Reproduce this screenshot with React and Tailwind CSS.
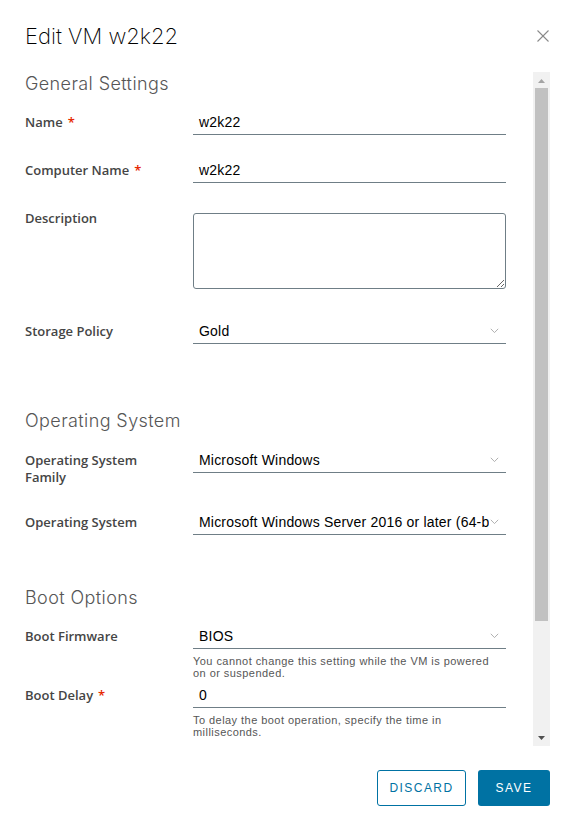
import React from "react";

const labelCls =
  "w-[169px] shrink-0 pt-[3px] pl-px text-[13px] leading-[17px] font-semibold text-[#454545] font-['Open_Sans',sans-serif]";
const headingCls =
  "text-[18px] leading-[24px] font-light text-[#565656] font-['Inter',sans-serif] tracking-[0.4px] pl-px";
const valueCls =
  "text-[14px] leading-[23px] tracking-[0.2px] text-black font-['Liberation_Sans',Arial,sans-serif]";
const helperCls =
  "mt-[6px] text-[11px] leading-[12px] tracking-[0.45px] text-[#565656] font-['Liberation_Sans',Arial,sans-serif] pr-[14px]";

function Req() {
  return <span className="ml-[5px] text-[#e62700]">*</span>;
}

function Label({ children, req }) {
  return (
    <div className={labelCls}>
      {children}
      {req && <Req />}
    </div>
  );
}

function TextInput({ value }) {
  return (
    <div className={`h-[24px] border-b border-[#6f7e86] pl-[6px] ${valueCls}`}>{value}</div>
  );
}

function Chevron() {
  return (
    <svg width="9" height="6" viewBox="0 0 9 6" className="block">
      <polyline points="0.8,0.8 4.5,4.6 8.2,0.8" fill="none" stroke="#b0b0b0" strokeWidth="1" />
    </svg>
  );
}

function Select({ value }) {
  return (
    <div className={`h-[24px] border-b border-[#6f7e86] pl-[6px] flex items-start ${valueCls}`}>
      <div className="flex-1 min-w-0 overflow-hidden whitespace-nowrap">{value}</div>
      <div className="w-[17px] shrink-0 pt-[8px] pl-[1px]">
        <Chevron />
      </div>
    </div>
  );
}

function Row({ className = "", label, req, children }) {
  return (
    <div className={`flex items-start ${className}`}>
      <Label req={req}>{label}</Label>
      <div className="flex-1 min-w-0">{children}</div>
    </div>
  );
}

function Scrollbar() {
  return (
    <div className="w-[17px] shrink-0 bg-[#f1f1f1] flex flex-col">
      <div className="h-[17px] flex items-center justify-center">
        <svg width="7" height="4" viewBox="0 0 7 4">
          <polygon points="0,4 3.5,0 7,4" fill="#a3a3a3" />
        </svg>
      </div>
      <div className="flex-1">
        <div className="mx-[2px] h-[533px] bg-[#c1c1c1] -mt-px" />
      </div>
      <div className="h-[17px] flex items-center justify-center">
        <svg width="7" height="4" viewBox="0 0 7 4">
          <polygon points="0,0 3.5,4 7,0" fill="#505050" />
        </svg>
      </div>
    </div>
  );
}

export default function App() {
  return (
    <div className="w-[574px] h-[829px] bg-white overflow-hidden flex flex-col">
      {/* Header */}
      <div className="h-[72px] shrink-0 flex items-start justify-between pl-6 pr-[25px] pt-[18px]">
        <h1 className="text-[22px] leading-[36px] font-extralight text-black font-['Inter',sans-serif] pl-px">
          Edit VM w2k22
        </h1>
        <svg width="12" height="12" viewBox="0 0 12 12" className="mt-[12px]">
          <line x1="0.5" y1="0.5" x2="11.5" y2="11.5" stroke="#8a8a8a" strokeWidth="1.1" />
          <line x1="11.5" y1="0.5" x2="0.5" y2="11.5" stroke="#8a8a8a" strokeWidth="1.1" />
        </svg>
      </div>

      {/* Body */}
      <div className="h-[674px] shrink-0 flex pl-6 pr-6">
        <div className="flex-1 min-w-0 overflow-hidden pr-[27px]">
          <div className={headingCls}>General Settings</div>

          <Row className="mt-[15px]" label="Name" req>
            <TextInput value="w2k22" />
          </Row>
          <Row className="mt-[24px]" label="Computer Name" req>
            <TextInput value="w2k22" />
          </Row>
          <Row className="mt-[24px]" label="Description">
            <textarea
              readOnly
              className="block mt-[6px] w-full h-[76px] border border-[#6f7e86] rounded-[3px] outline-none resize-y"
            />
          </Row>
          <Row className="mt-[31px]" label="Storage Policy">
            <Select value="Gold" />
          </Row>

          <div className={`${headingCls} mt-[65px]`}>Operating System</div>

          <Row className="mt-[16px]" label={<>Operating System<br />Family</>}>
            <Select value="Microsoft Windows" />
          </Row>
          <Row className="mt-[25px]" label="Operating System">
            <Select value="Microsoft Windows Server 2016 or later (64-bit)" />
          </Row>

          <div className={`${headingCls} mt-[51px]`}>Boot Options</div>

          <Row className="mt-[15px]" label="Boot Firmware">
            <Select value="BIOS" />
            <div className={helperCls}>
              You cannot change this setting while the VM is powered on or suspended.
            </div>
          </Row>
          <Row className="mt-[5px]" label="Boot Delay" req>
            <TextInput value="0" />
            <div className={helperCls}>
              To delay the boot operation, specify the time in milliseconds.
            </div>
          </Row>
        </div>
        <Scrollbar />
      </div>

      {/* Footer */}
      <div className="flex justify-end gap-3 pr-6 pt-[24px]">
        <button className="h-[36px] w-[89px] rounded-[3px] border border-[#0072a3] bg-white text-[#0072a3] text-[12px] tracking-[0.12em] font-['Liberation_Sans',Arial,sans-serif]">
          DISCARD
        </button>
        <button className="h-[36px] w-[72px] rounded-[3px] bg-[#0072a3] text-white text-[12px] tracking-[0.12em] font-['Liberation_Sans',Arial,sans-serif]">
          SAVE
        </button>
      </div>
    </div>
  );
}
